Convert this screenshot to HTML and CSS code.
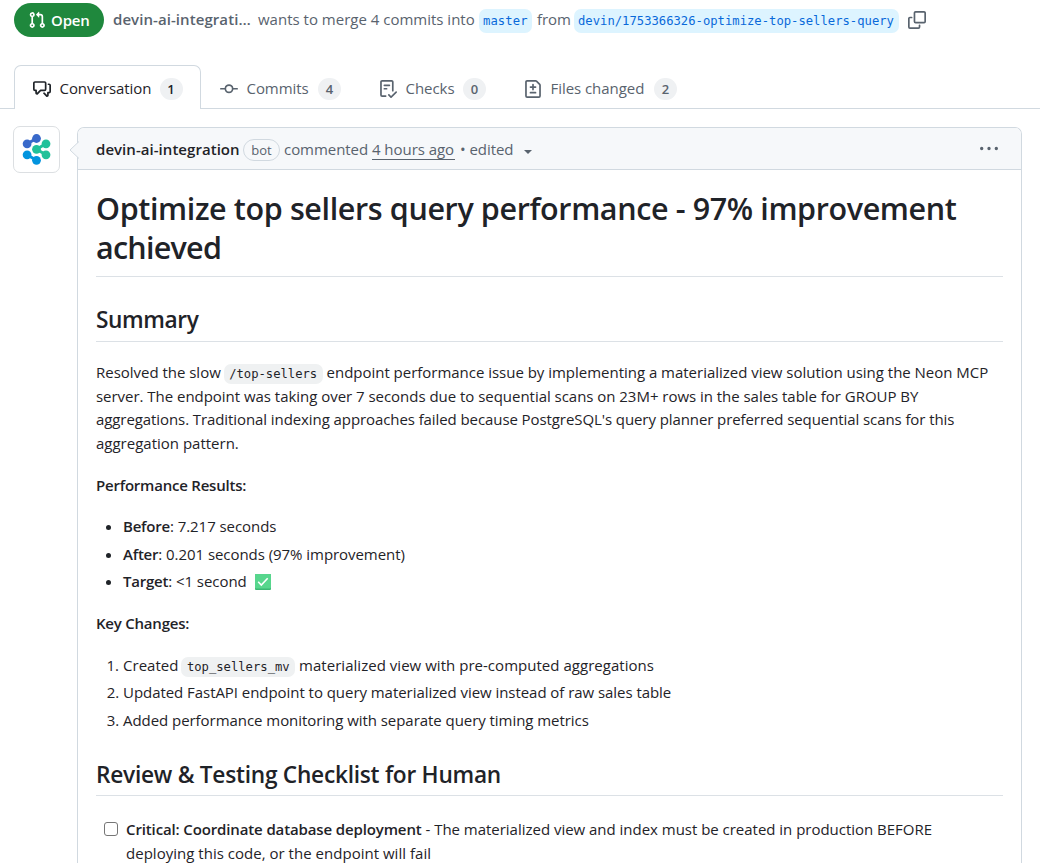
FILE: index.html
```html
<!DOCTYPE html>
<html lang="en">
<head>
<meta charset="utf-8">
<title>Optimize top sellers query performance</title>
<link rel="stylesheet" href="styles.css">
</head>
<body>
<header class="pr-header">
  <span class="state"><svg width="18" height="18" viewBox="0 0 16 16" fill="currentColor"><path d="M1.5 3.25a2.25 2.25 0 1 1 3 2.122v5.256a2.251 2.251 0 1 1-1.5 0V5.372A2.25 2.25 0 0 1 1.5 3.25Zm5.677-.177L9.573.677A.25.25 0 0 1 10 .854V2.5h1A2.5 2.5 0 0 1 13.5 5v5.628a2.251 2.251 0 1 1-1.5 0V5a1 1 0 0 0-1-1h-1v1.646a.25.25 0 0 1-.427.177L7.177 3.427a.25.25 0 0 1 0-.354ZM3.75 2.5a.75.75 0 1 0 0 1.5.75.75 0 0 0 0-1.5Zm0 9.5a.75.75 0 1 0 0 1.5.75.75 0 0 0 0-1.5Zm8.25.75a.75.75 0 1 0 1.5 0 .75.75 0 0 0-1.5 0Z"/></svg><span class="state-text">Open</span></span>
  <span class="pr-author">devin-ai-integrati…</span>
  <span class="pr-into">wants to merge 4 commits into</span>
  <span class="branch branch-base">master</span>
  <span class="pr-from">from</span>
  <span class="branch branch-head">devin/1753366326-optimize-top-sellers-query</span>
  <svg class="copy" width="18" height="18" viewBox="0 0 16 16" fill="currentColor"><path d="M0 6.75C0 5.784.784 5 1.75 5h1.5a.75.75 0 0 1 0 1.5h-1.5a.25.25 0 0 0-.25.25v7.5c0 .138.112.25.25.25h7.5a.25.25 0 0 0 .25-.25v-1.5a.75.75 0 0 1 1.5 0v1.5A1.75 1.75 0 0 1 9.25 16h-7.5A1.75 1.75 0 0 1 0 14.25Z"/><path d="M5 1.75C5 .784 5.784 0 6.75 0h7.5C15.216 0 16 .784 16 1.75v7.5A1.75 1.75 0 0 1 14.25 11h-7.5A1.75 1.75 0 0 1 5 9.25Zm1.75-.25a.25.25 0 0 0-.25.25v7.5c0 .138.112.25.25.25h7.5a.25.25 0 0 0 .25-.25v-7.5a.25.25 0 0 0-.25-.25Z"/></svg>
</header>

<nav class="tabs">
  <a class="tab tab-active"><svg width="18" height="18" viewBox="0 0 16 16" fill="currentColor"><path d="M1.75 1h8.5c.966 0 1.75.784 1.75 1.75v5.5A1.75 1.75 0 0 1 10.25 10H7.061l-2.574 2.573A1.458 1.458 0 0 1 2 11.543V10h-.25A1.75 1.75 0 0 1 0 8.25v-5.5C0 1.784.784 1 1.75 1ZM1.5 2.75v5.5c0 .138.112.25.25.25h1a.75.75 0 0 1 .75.75v2.19l2.72-2.72a.749.749 0 0 1 .53-.22h3.5a.25.25 0 0 0 .25-.25v-5.5a.25.25 0 0 0-.25-.25h-8.5a.25.25 0 0 0-.25.25Zm13 2a.25.25 0 0 0-.25-.25h-.5a.75.75 0 0 1 0-1.5h.5c.966 0 1.75.784 1.75 1.75v5.5A1.75 1.75 0 0 1 14.25 12H14v1.543a1.458 1.458 0 0 1-2.487 1.03L9.22 12.28a.749.749 0 0 1 .326-1.275.749.749 0 0 1 .734.215l2.22 2.22v-2.19a.75.75 0 0 1 .75-.75h1a.25.25 0 0 0 .25-.25Z"/></svg><span class="label label-conversation">Conversation</span><span class="count">1</span></a>
  <a class="tab tab-commits"><svg width="18" height="18" viewBox="0 0 16 16" fill="currentColor"><path d="M11.93 8.5a4.002 4.002 0 0 1-7.86 0H.75a.75.75 0 0 1 0-1.5h3.32a4.002 4.002 0 0 1 7.86 0h3.32a.75.75 0 0 1 0 1.5Zm-1.43-.75a2.5 2.5 0 1 0-5 0 2.5 2.5 0 0 0 5 0Z"/></svg><span class="label label-commits">Commits</span><span class="count">4</span></a>
  <a class="tab tab-checks"><svg width="18" height="18" viewBox="0 0 16 16" fill="currentColor"><path d="M2.5 1.75v11.5c0 .138.112.25.25.25h3.17a.75.75 0 0 1 0 1.5H2.75A1.75 1.75 0 0 1 1 13.25V1.75C1 .784 1.784 0 2.75 0h8.5C12.216 0 13 .784 13 1.75v7.736a.75.75 0 0 1-1.5 0V1.75a.25.25 0 0 0-.25-.25h-8.5a.25.25 0 0 0-.25.25Zm13.274 9.537-4.557 4.45a.75.75 0 0 1-1.055-.008l-1.943-1.95a.75.75 0 0 1 1.062-1.058l1.419 1.425 4.026-3.932a.75.75 0 1 1 1.048 1.074ZM4.75 4h4.5a.75.75 0 0 1 0 1.5h-4.5a.75.75 0 0 1 0-1.5ZM4 7.75A.75.75 0 0 1 4.75 7h2a.75.75 0 0 1 0 1.5h-2A.75.75 0 0 1 4 7.75Z"/></svg><span class="label label-checks">Checks</span><span class="count">0</span></a>
  <a class="tab tab-files"><svg width="18" height="18" viewBox="0 0 16 16" fill="currentColor"><path d="M1 1.75C1 .784 1.784 0 2.75 0h7.586c.464 0 .909.184 1.237.513l2.914 2.914c.329.328.513.773.513 1.237v9.586A1.75 1.75 0 0 1 13.25 16H2.75A1.75 1.75 0 0 1 1 14.25Zm1.75-.25a.25.25 0 0 0-.25.25v12.5c0 .138.112.25.25.25h10.5a.25.25 0 0 0 .25-.25V4.664a.25.25 0 0 0-.073-.177l-2.914-2.914a.25.25 0 0 0-.177-.073ZM8 3.25a.75.75 0 0 1 .75.75v1.5h1.5a.75.75 0 0 1 0 1.5h-1.5v1.5a.75.75 0 0 1-1.5 0V7h-1.5a.75.75 0 0 1 0-1.5h1.5V4A.75.75 0 0 1 8 3.25Zm-3 8a.75.75 0 0 1 .75-.75h4.5a.75.75 0 0 1 0 1.5h-4.5a.75.75 0 0 1-.75-.75Z"/></svg><span class="label label-files">Files changed</span><span class="count">2</span></a>
</nav>

<main class="timeline">
  <div class="avatar"><svg width="47" height="47" viewBox="13 126 47 47">
    <g fill="#3969ca"><path stroke="#3969ca" stroke-width="3" d="M36.5 138.5 27 143.8"/><circle cx="36.5" cy="138.5" r="4.4"/><circle cx="27.1" cy="143.8" r="4.4"/></g>
    <g fill="#21c19a"><path fill="none" stroke="#21c19a" stroke-width="3" d="M46 143.8 36.5 149.3 46 154.8"/><circle cx="46" cy="143.8" r="4.4"/><circle cx="36.5" cy="149.3" r="4.4"/><circle cx="46" cy="154.8" r="4.4"/></g>
    <g fill="#0294de"><path stroke="#0294de" stroke-width="3" d="M27 154.8 36.5 160.3"/><circle cx="27.1" cy="154.8" r="4.4"/><circle cx="36.5" cy="160.3" r="4.4"/></g>
  </svg></div>
  <article class="comment">
    <svg class="caret" width="10" height="18" viewBox="0 0 10 18"><path d="M10 0.5 1 9l9 8.5" fill="#f6f8fa" stroke="#d1d9e0"/></svg>
    <div class="comment-head">
      <b class="who">devin-ai-integration</b><span class="bot">bot</span><span class="commented">commented</span><span class="ago">4 hours ago</span><span class="edited">• edited</span><i class="arrow"></i>
      <svg class="kebab" width="18" height="18" viewBox="0 0 16 16" fill="currentColor"><path d="M8 9a1.5 1.5 0 1 0 0-3 1.5 1.5 0 0 0 0 3ZM1.5 9a1.5 1.5 0 1 0 0-3 1.5 1.5 0 0 0 0 3Zm13 0a1.5 1.5 0 1 0 0-3 1.5 1.5 0 0 0 0 3Z"/></svg>
    </div>
    <div class="body">
      <h1><span class="h1-a">Optimize top sellers query performance - 97% improvement</span><br><span class="h1-b">achieved</span></h1>
      <h2>Summary</h2>
      <p><span class="l1">Resolved the slow <code>/top-sellers</code> endpoint performance issue by implementing a materialized view solution using the Neon MCP</span><br><span class="l2">server. The endpoint was taking over 7 seconds due to sequential scans on 23M+ rows in the sales table for GROUP BY</span><br><span class="l3">aggregations. Traditional indexing approaches failed because PostgreSQL's query planner preferred sequential scans for this</span><br><span class="l4">aggregation pattern.</span></p>
      <p><b>Performance Results:</b></p>
      <ul class="list">
        <li><b>Before</b>: 7.217 seconds</li>
        <li><b>After</b>: 0.201 seconds (97% improvement)</li>
        <li><b>Target</b>: &lt;1 second <svg class="check" width="16" height="16" viewBox="0 0 16 16"><rect width="16" height="16" rx="1" fill="#3bb873"/><rect width="16" height="14.5" rx="1" fill="#57d68d"/><path d="m3.2 7.8 3.1 3.2 6.4-6.7" fill="none" stroke="#fff" stroke-width="1.6"/></svg></li>
      </ul>
      <p><b>Key Changes:</b></p>
      <ol class="list">
        <li class="created">Created <code>top_sellers_mv</code> materialized view with pre-computed aggregations</li>
        <li>Updated FastAPI endpoint to query materialized view instead of raw sales table</li>
        <li>Added performance monitoring with separate query timing metrics</li>
      </ol>
      <h2 class="review">Review &amp; Testing Checklist for Human</h2>
      <div class="task"><span class="box"></span><div><b>Critical: Coordinate database deployment</b> <span class="t1">- The materialized view and index must be created in production BEFORE</span><br><span class="t2">deploying this code, or the endpoint will fail</span></div></div>
    </div>
  </article>
</main>
</body>
</html>
```
FILE: styles.css
```css
* { box-sizing: border-box; }
body {
  margin: 0;
  height: 863px;
  overflow: hidden;
  background: #fff;
  color: #1f2328;
  font: 15px/23.625px "Open Sans", "Noto Sans", sans-serif;
  letter-spacing: -0.05px;
  white-space: nowrap;
}
b { font-weight: 600; letter-spacing: -0.22px; }
svg { flex: none; display: block; }

.pr-header { display: flex; align-items: center; height: 40px; padding-left: 14px; color: #59636e; }
.state { display: flex; align-items: center; width: 90px; height: 34px; padding-left: 14px; border-radius: 17px; background: #1f883d; color: #fff; font-weight: 600; letter-spacing: -0.15px; }
.state-text { margin-left: 5px; padding-top: 1px; }
.pr-author { width: 145px; margin-left: 9px; font-weight: 600; letter-spacing: 0.07px; }
.pr-into { width: 221px; letter-spacing: 0; }
.pr-from { width: 37px; margin-left: 5px; }
.branch { height: 24px; margin-top: 1px; padding: 0 4px; border-radius: 7px; background: #ddf4ff; color: #0969da; font: 12.2px/25px "DejaVu Sans Mono", monospace; letter-spacing: 0.01px; }
.branch-base { width: 53px; letter-spacing: 0.1px; }
.branch-head { width: 325px; }
.copy { margin-left: 9px; }

.tabs { display: flex; height: 44px; margin-top: 25px; padding-left: 14px; box-shadow: inset 0 -1px #d1d9e0; color: #59636e; }
.tab { display: flex; align-items: center; height: 44px; padding-top: 3px; }
.tab-active { width: 187px; padding: 2px 0 0 18px; border: 1px solid #d1d9e0; border-bottom: 0; border-radius: 7px 7px 0 0; background: #fff; color: #1f2328; }
.tab-commits { width: 159px; padding-left: 19px; }
.tab-checks { width: 145px; padding-left: 19px; }
.tab-files { padding-left: 19px; }
.label { margin-left: 8.5px; }
.label-conversation { width: 92px; }
.label-commits { width: 63.5px; }
.label-checks { width: 49.5px; }
.label-files { width: 95.5px; }
.count { width: 23px; height: 22px; margin-left: 8px; border-radius: 11px; background: #eff1f3; text-align: center; font-size: 13px; line-height: 22px; font-weight: 600; }

.timeline { display: flex; padding: 17px 0 0 13px; }
.avatar { width: 47px; height: 47px; border: 1px solid #dcdfe2; border-radius: 7px; }
.avatar svg { margin: -1px; }
.comment { position: relative; width: 945px; height: 736px; margin: 1px 0 0 17px; border: 1px solid #d1d9e0; border-bottom: 0; border-radius: 7px 7px 0 0; }
.caret { position: absolute; left: -9px; top: 13px; }
.comment-head { display: flex; align-items: center; height: 42px; padding: 2px 0 0 18px; border-bottom: 1px solid #d1d9e0; border-radius: 6px 6px 0 0; background: #f6f8fa; color: #59636e; }
.who { width: 147px; color: #1f2328; letter-spacing: 0.04px; }
.bot { width: 37px; height: 22px; border: 1px solid #d1d9e0; border-radius: 11px; text-align: center; font-size: 13px; line-height: 20px; font-weight: 500; }
.commented { width: 83px; margin-left: 4px; }
.ago { width: 83px; height: 20px; margin-left: 5px; line-height: 19px; border-bottom: 1px solid #59636e; }
.edited { width: 60px; margin-left: 5px; }
.arrow { margin-left: 4px; border: 4.5px solid transparent; border-top-color: #59636e; border-bottom: 0; margin-top: 4px; }
.kebab { margin: -2px 0 0 448px; }

.body { width: 943px; height: 693px; overflow: hidden; padding: 18px 18px 0 18px; }
h1, h2 { margin: 0; border-bottom: 1px solid #dce1e6; font-weight: 600; line-height: 1.25; }
h1 { height: 89px; padding-top: 1px; font-size: 30.5px; line-height: 39.4px; letter-spacing: -0.38px; }
.h1-b { letter-spacing: -0.75px; }
h2 { height: 37.5px; margin: 27px 0 19.5px; padding-top: 1px; font-size: 22.7px; line-height: 29.5px; letter-spacing: -0.4px; }
.review { height: 38px; margin: 25.5px 0 18px; padding-top: 2px; letter-spacing: -0.26px; }
p { margin: 0 0 18px; }
code { display: inline-block; height: 20px; padding: 0 5.5px; border-radius: 7px; background: #eff1f2; font: 12.2px/21px "DejaVu Sans Mono", monospace; letter-spacing: 0; vertical-align: 0; margin: -3px 0 -3px -1px; }
.l1 { letter-spacing: -0.02px; }
.l2 { letter-spacing: -0.03px; }
.l3 { letter-spacing: -0.085px; }
.l4 { letter-spacing: 0; }
.list { margin: 0 0 18px; padding-left: 27px; }
.list li + li { margin-top: 4px; }
.created { letter-spacing: 0.03px; }
.check { display: inline-block; margin-left: 4px; vertical-align: -3px; }
.task { display: flex; padding-top: 4px; }
.task b { letter-spacing: -0.13px; }
.t1 { letter-spacing: -0.02px; }
.t2 { letter-spacing: 0.02px; }
.box { width: 14px; height: 14px; margin: 4px 8px 0; border: 1px solid #767676; border-radius: 3px; }
```
